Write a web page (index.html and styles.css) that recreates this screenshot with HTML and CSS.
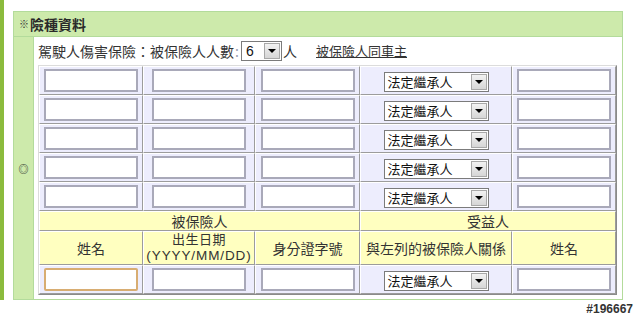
FILE: index.html
```html
<!DOCTYPE html>
<html lang="zh-Hant">
<head>
<meta charset="utf-8">
<title>險種資料</title>
<link rel="stylesheet" href="styles.css">
</head>
<body>
<div class="page">
  <div class="stripe"></div>
  <div class="wrap">
    <div class="box">
      <div class="box-head"><span class="mark">※</span>險種資料</div>
      <div class="box-body">
        <div class="side">◎</div>
        <div class="main">
          <div class="line">
            <span class="lbl">駕駛人傷害保險：被保險人人數</span><span class="colon">:</span>
            <span class="sel sel-n"><span class="sel-v">6</span><span class="sel-btn"></span></span>
            <span class="unit">人</span>
            <span class="link">被保險人同車主</span>
          </div>
          <table class="grid">
            <colgroup>
              <col class="c1"><col class="c2"><col class="c3"><col class="c4"><col class="c5">
            </colgroup>
            <tbody>
              <tr class="data">
                <td><span class="inp"></span></td><td><span class="inp"></span></td><td><span class="inp"></span></td>
                <td><span class="sel sel-r"><span class="sel-v">法定繼承人</span><span class="sel-btn"></span></span></td>
                <td><span class="inp"></span></td>
              </tr>
              <tr class="data">
                <td><span class="inp"></span></td><td><span class="inp"></span></td><td><span class="inp"></span></td>
                <td><span class="sel sel-r"><span class="sel-v">法定繼承人</span><span class="sel-btn"></span></span></td>
                <td><span class="inp"></span></td>
              </tr>
              <tr class="data">
                <td><span class="inp"></span></td><td><span class="inp"></span></td><td><span class="inp"></span></td>
                <td><span class="sel sel-r"><span class="sel-v">法定繼承人</span><span class="sel-btn"></span></span></td>
                <td><span class="inp"></span></td>
              </tr>
              <tr class="data">
                <td><span class="inp"></span></td><td><span class="inp"></span></td><td><span class="inp"></span></td>
                <td><span class="sel sel-r"><span class="sel-v">法定繼承人</span><span class="sel-btn"></span></span></td>
                <td><span class="inp"></span></td>
              </tr>
              <tr class="data">
                <td><span class="inp"></span></td><td><span class="inp"></span></td><td><span class="inp"></span></td>
                <td><span class="sel sel-r"><span class="sel-v">法定繼承人</span><span class="sel-btn"></span></span></td>
                <td><span class="inp"></span></td>
              </tr>
              <tr class="head1">
                <th colspan="3">被保險人</th>
                <th colspan="2">受益人</th>
              </tr>
              <tr class="head2">
                <th>姓名</th>
                <th><span class="hl cjk">出生日期</span><span class="hl lat">(YYYY/MM/DD)</span></th>
                <th>身分證字號</th>
                <th>與左列的被保險人關係</th>
                <th>姓名</th>
              </tr>
              <tr class="data">
                <td><span class="inp inp-focus"></span></td><td><span class="inp"></span></td><td><span class="inp"></span></td>
                <td><span class="sel sel-r"><span class="sel-v">法定繼承人</span><span class="sel-btn"></span></span></td>
                <td><span class="inp"></span></td>
              </tr>
            </tbody>
          </table>
        </div>
      </div>
    </div>
  </div>
</div>
<div class="wm">#196667</div>
</body>
</html>
```

FILE: styles.css
```css
* { box-sizing: border-box; }

body {
  margin: 0;
  background: #fff;
  font-family: "Noto Sans CJK TC", "Noto Sans", sans-serif;
  color: #333;
  font-size: 14px;
}

.page {
  display: flex;
}

.stripe {
  width: 4px;
  background: #8bbb3d;
}

.wrap {
  padding: 11px 0 0 9px;
}

.box {
  width: 610px;
  border: 1px solid #b3db9b;
}

.box-head {
  height: 25px;
  border-bottom: 1px solid #b3db9b;
  background: #cdeaab;
  padding-left: 5px;
  display: flex;
  align-items: center;
  font-weight: bold;
  font-size: 14px;
  color: #2a2a2a;
  line-height: 1;
}

.mark {
  font-size: 10px;
  font-weight: normal;
  color: #333;
  margin-right: 1px;
}

.box-body {
  display: flex;
}

.side {
  width: 20px;
  border-right: 1px solid #b3db9b;
  background: #cdeaab;
  display: flex;
  align-items: center;
  justify-content: center;
  font-size: 10px;
  color: #222;
}

.main {
  flex: 1;
  padding: 4px 5px 4px 4px;
}

.line {
  height: 20px;
  margin-bottom: 4px;
  display: flex;
  align-items: center;
  font-size: 14px;
  line-height: 20px;
  white-space: nowrap;
}

.colon {
  display: inline-block;
  width: 7px;
  color: #9aa0b0;
  padding-left: 1px;
}

.unit {
  margin-left: 1px;
}

.link {
  margin-left: 19px;
  font-size: 13px;
  text-decoration: underline;
  color: #333;
}

/* select look-alike */
.sel {
  display: inline-flex;
  align-items: center;
  justify-content: space-between;
  height: 20px;
  border: 1px solid #7b7b7b;
  background: #fff;
  padding: 0 1px 0 4px;
  color: #111;
  vertical-align: middle;
}

.sel-n {
  width: 41px;
  font-family: "Liberation Sans", Arial, sans-serif;
  font-size: 14px;
}

.sel-r {
  width: 105px;
  font-size: 13px;
  padding-left: 3px;
  text-align: left;
}

.sel-v {
  line-height: 18px;
}

.sel-btn {
  width: 16px;
  height: 16px;
  border: 1px solid;
  border-color: #f4f4f4 #6a6a6a #6a6a6a #f4f4f4;
  outline: 1px solid #a8a8a8;
  outline-offset: -1px;
  background: linear-gradient(#f2f2f2, #d6d6d6);
  display: flex;
  align-items: center;
  justify-content: center;
}

.sel-btn::after {
  content: "";
  width: 0;
  height: 0;
  border-left: 4px solid transparent;
  border-right: 4px solid transparent;
  border-top: 4px solid #000;
}

/* grid table */
.grid {
  width: 579px;
  table-layout: fixed;
  border-collapse: separate;
  border-spacing: 0;
  border: 1px solid;
  border-color: #dcdcdc #8a8a8a #8a8a8a #dcdcdc;
}

.c1 { width: 104px; }
.c2 { width: 112px; }
.c3 { width: 105px; }
.c4 { width: 152px; }
.c5 { width: 104px; }

.grid td,
.grid th {
  border: 1px solid;
  border-color: #ffffff #9c9c9c #9c9c9c #ffffff;
  text-align: center;
  vertical-align: middle;
}

.grid td {
  background: #ededfd;
  padding: 2px 0;
  height: 29px;
}

.inp {
  display: block;
  margin: 0 auto;
  width: 94px;
  height: 23px;
  border: 2px solid #a9a9b9;
  background: #fff;
}

.inp-focus {
  border-color: #d8ad72;
  border-radius: 2px;
}

.grid th {
  background: #ffffc0;
  font-weight: normal;
  font-size: 14px;
  color: #333;
  padding: 0;
}

.head1 th {
  height: 20px;
  line-height: 18px;
}

.head2 th {
  height: 34px;
  line-height: 16px;
  padding: 0;
}

.hl {
  display: block;
  height: 16px;
  line-height: 16px;
  font-family: "Liberation Sans", "Noto Sans CJK TC", sans-serif;
}

.cjk {
  font-size: 13px;
  letter-spacing: 0.5px;
}

.lat {
  font-size: 13.5px;
  letter-spacing: 0.9px;
}

.wm {
  text-align: right;
  padding: 2px 2px 0 0;
  font-family: "Liberation Sans", Arial, sans-serif;
  font-weight: bold;
  font-size: 12px;
  line-height: 14px;
  color: #333;
  text-shadow: 0 0 1px #fff;
}
```
